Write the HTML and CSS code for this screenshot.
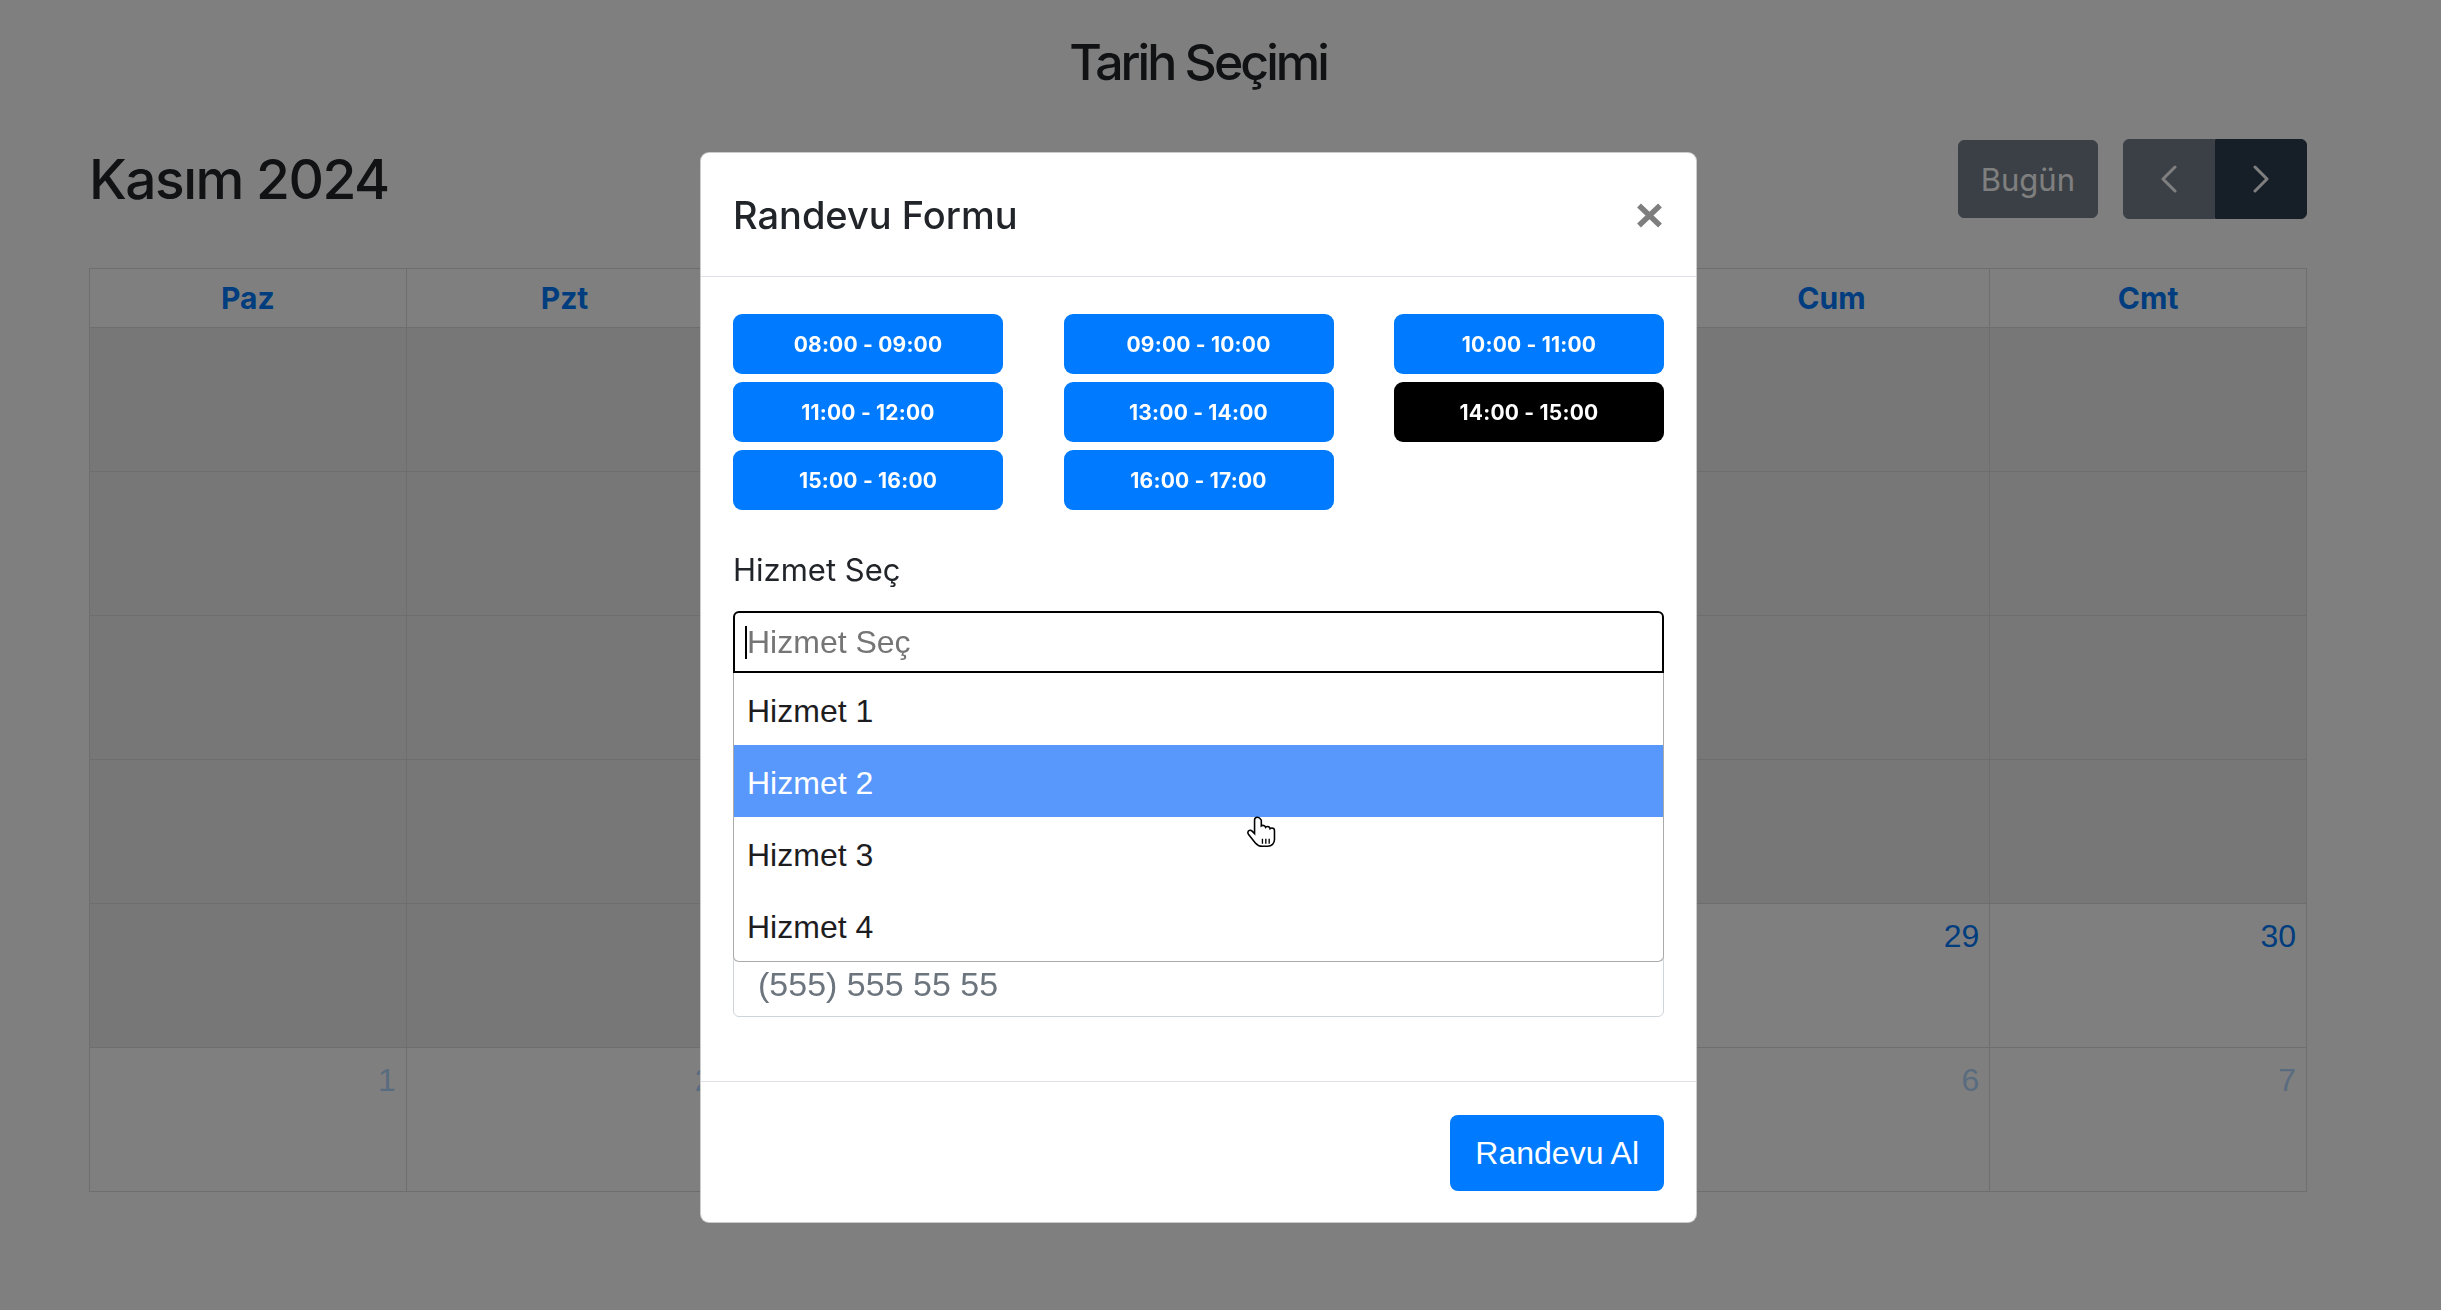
FILE: index.html
```html
<!DOCTYPE html>
<html lang="tr">
<head>
  <meta charset="UTF-8" />
  <meta name="viewport" content="width=device-width, initial-scale=1.0" />
  <title>Tarih Seçimi</title>
  <link rel="stylesheet" href="styles.css">
</head>
<body>
  <div class="page">
    <h2 class="page-title">Tarih Seçimi</h2>

    <div class="toolbar">
      <h1 class="cal-title">Kasım 2024</h1>
      <div class="toolbar-actions">
        <button class="fc-btn today-btn" disabled>Bugün</button>
        <div class="nav-group">
          <button class="fc-btn" disabled aria-label="Önceki">
            <svg width="16" height="28" viewBox="0 0 16 28"><polyline points="14,2 2,14 14,26" fill="none" stroke="#fff" stroke-width="3" stroke-linecap="round" stroke-linejoin="round"/></svg>
          </button>
          <button class="fc-btn" aria-label="Sonraki">
            <svg width="16" height="28" viewBox="0 0 16 28"><polyline points="2,2 14,14 2,26" fill="none" stroke="#fff" stroke-width="3" stroke-linecap="round" stroke-linejoin="round"/></svg>
          </button>
        </div>
      </div>
    </div>

    <div class="month-grid">
      <div class="dow">Paz</div>
      <div class="dow">Pzt</div>
      <div class="dow">Sal</div>
      <div class="dow">Çar</div>
      <div class="dow">Per</div>
      <div class="dow">Cum</div>
      <div class="dow">Cmt</div>

      <div class="day past"></div><div class="day past"></div><div class="day past"></div><div class="day past"></div><div class="day past"></div><div class="day past"></div><div class="day past"></div>
      <div class="day past"></div><div class="day past"></div><div class="day past"></div><div class="day past"></div><div class="day past"></div><div class="day past"></div><div class="day past"></div>
      <div class="day past"></div><div class="day past"></div><div class="day past"></div><div class="day past"></div><div class="day past"></div><div class="day past"></div><div class="day past"></div>
      <div class="day past"></div><div class="day past"></div><div class="day past"></div><div class="day past"></div><div class="day past"></div><div class="day past"></div><div class="day past"></div>
      <div class="day past"></div><div class="day past"></div><div class="day past"></div><div class="day past"></div><div class="day past"></div>
      <div class="day"><span class="num">29</span></div>
      <div class="day"><span class="num">30</span></div>

      <div class="day other"><span class="num">1</span></div>
      <div class="day other"><span class="num">2</span></div>
      <div class="day other"><span class="num">3</span></div>
      <div class="day other"><span class="num">4</span></div>
      <div class="day other"><span class="num">5</span></div>
      <div class="day other"><span class="num">6</span></div>
      <div class="day other"><span class="num">7</span></div>
    </div>
  </div>

  <div class="backdrop"></div>

  <div class="modal">
    <div class="modal-dialog">
      <div class="modal-content">
        <div class="modal-header">
          <h5 class="modal-title">Randevu Formu</h5>
          <button class="close" aria-label="Kapat">
            <svg width="27" height="25" viewBox="0 0 27 25"><path d="M3 2.5 L24 22.5 M24 2.5 L3 22.5" stroke="#000" stroke-width="5.5"/></svg>
          </button>
        </div>

        <div class="modal-body">
          <div class="slots">
            <button class="slot">08:00 - 09:00</button>
            <button class="slot">09:00 - 10:00</button>
            <button class="slot">10:00 - 11:00</button>
            <button class="slot">11:00 - 12:00</button>
            <button class="slot">13:00 - 14:00</button>
            <button class="slot active">14:00 - 15:00</button>
            <button class="slot">15:00 - 16:00</button>
            <button class="slot">16:00 - 17:00</button>
          </div>

          <label class="field-label">Hizmet Seç</label>
          <div class="combo">
            <div class="combo-search"><span class="caret"></span><span>Hizmet Seç</span></div>
            <ul class="combo-list">
              <li>Hizmet 1</li>
              <li class="highlighted">Hizmet 2</li>
              <li>Hizmet 3</li>
              <li>Hizmet 4</li>
            </ul>
          </div>

          <div class="phone-group">
            <input type="text" class="form-control" placeholder="(555) 555 55 55" />
          </div>
        </div>

        <div class="modal-footer">
          <button class="btn-submit">Randevu Al</button>
        </div>
      </div>
    </div>
  </div>

  <svg class="pointer" width="36" height="36" viewBox="0 0 32 32">
    <path d="M11 2c-1.5 0-2.5 1-2.5 2.5v12l-2.2-2.2c-1-1-2.8-1-3.5.2-.6 1-.3 2 .4 2.8l6 7.5c1.5 1.8 3 3 6 3h5c3.5 0 6-2.5 6-6v-8c0-1.3-1-2.3-2.3-2.3-.7 0-1.2.3-1.6.7-.2-1.2-1.1-2-2.3-2-.7 0-1.3.3-1.7.8-.3-1.1-1.2-1.8-2.3-1.8-.6 0-1.1.2-1.5.5V4.5C13.5 3 12.5 2 11 2z" fill="#fff" stroke="#000" stroke-width="1.4"/>
    <path d="M15.5 21v4.5M18.5 21v4.5M21.5 21v4.5" stroke="#000" stroke-width="1.2"/>
  </svg>
</body>
</html>
```

FILE: styles.css
```css
* {
  box-sizing: border-box;
}

body {
  margin: 0;
  background: #fff;
  color: #212529;
  font-family: Inter, "Noto Sans", sans-serif;
}

button {
  font-family: inherit;
  cursor: pointer;
}

.page {
  width: 2218px;
  margin-left: 89px;
}

.page-title {
  margin: 0;
  padding-top: 32px;
  font-size: 50px;
  line-height: 60px;
  font-weight: 500;
  letter-spacing: -3px;
  text-align: center;
}

/* calendar toolbar */
.toolbar {
  display: flex;
  justify-content: space-between;
  align-items: center;
  height: 80px;
  margin-top: 47px;
}

.cal-title {
  margin: 0;
  font-size: 55px;
  line-height: 66px;
  font-weight: 500;
  letter-spacing: -1.5px;
}

.toolbar-actions {
  display: flex;
  align-items: center;
  gap: 25px;
}

.fc-btn {
  background: #2c3e50;
  border: 1px solid #2c3e50;
  color: #fff;
  border-radius: 6px;
}

.fc-btn:disabled {
  opacity: 0.65;
}

.today-btn {
  height: 78px;
  padding: 0 22px;
  font-size: 31px;
}

.nav-group {
  display: flex;
}

.nav-group .fc-btn {
  width: 92px;
  height: 80px;
  padding: 0;
  display: flex;
  align-items: center;
  justify-content: center;
}

.nav-group .fc-btn:first-child {
  border-radius: 6px 0 0 6px;
}

.nav-group .fc-btn:last-child {
  border-radius: 0 6px 6px 0;
}

/* month grid */
.month-grid {
  display: grid;
  grid-template-columns: repeat(7, 1fr);
  grid-template-rows: 59px repeat(6, 144px);
  margin-top: 49px;
  border-top: 1px solid #ddd;
  border-left: 1px solid #ddd;
}

.dow,
.day {
  border-right: 1px solid #ddd;
  border-bottom: 1px solid #ddd;
}

.dow {
  display: flex;
  align-items: center;
  justify-content: center;
  font-size: 30px;
  font-weight: 700;
  color: #007bff;
}

.day {
  text-align: right;
  padding: 14px 10px 0 0;
}

.day.past {
  background: #eee;
}

.num {
  font-family: "Liberation Sans", Arial, sans-serif;
  font-size: 32px;
  color: #007bff;
}

.day.other .num {
  opacity: 0.3;
}

/* modal */
.backdrop {
  position: fixed;
  inset: 0;
  background: rgba(0, 0, 0, 0.5);
}

.modal {
  position: fixed;
  inset: 0;
  padding-right: 44px;
}

.modal-dialog {
  width: 997px;
  margin: 152px auto 0;
}

.modal-content {
  background: #fff;
  border: 1px solid rgba(0, 0, 0, 0.2);
  border-radius: 9px;
}

.modal-header {
  display: flex;
  justify-content: space-between;
  align-items: center;
  padding: 32px 33px 31px 32px;
  border-bottom: 1px solid #dee2e6;
}

.modal-title {
  margin: 0;
  font-size: 38px;
  line-height: 60px;
  font-weight: 500;
}

.close {
  background: none;
  border: 0;
  padding: 0;
  opacity: 0.5;
  display: flex;
}

.modal-body {
  padding: 37px 32px 64px;
}

.slots {
  display: grid;
  grid-template-columns: repeat(3, 270px);
  justify-content: space-between;
  row-gap: 8px;
}

.slot {
  height: 60px;
  border: 0;
  border-radius: 9px;
  background: #007bff;
  color: #fff;
  font-size: 21px;
  font-weight: 700;
  letter-spacing: 0.2px;
}

.slot.active {
  background: #000;
}

.field-label {
  display: block;
  margin: 37px 0 18px;
  font-size: 31px;
  line-height: 46px;
}

.combo {
  position: relative;
}

.combo-search {
  display: flex;
  align-items: center;
  height: 62px;
  padding-left: 10px;
  border: 2px solid #000;
  border-radius: 6px 6px 0 0;
  font-family: "Liberation Sans", Arial, sans-serif;
  font-size: 32px;
  color: #757575;
}

.caret {
  width: 2px;
  height: 33px;
  background: #000;
}

.combo-list {
  position: absolute;
  top: 100%;
  left: 0;
  right: 0;
  z-index: 2;
  margin: 0;
  padding: 0;
  list-style: none;
  background: #fff;
  border: 1px solid #aaa;
  border-top: 0;
  border-radius: 0 0 6px 6px;
}

.combo-list li {
  display: flex;
  align-items: center;
  height: 72px;
  padding: 4px 0 0 13px;
  font-family: "Liberation Sans", Arial, sans-serif;
  font-size: 32px;
  color: #1d1d1f;
}

.combo-list li.highlighted {
  background: #5897fb;
  color: #fff;
}

.phone-group {
  margin-top: 278px;
}

.form-control {
  display: block;
  width: 100%;
  height: 66px;
  padding: 0 24px;
  border: 1px solid #ced4da;
  border-radius: 6px;
  font-family: "Liberation Sans", Arial, sans-serif;
  font-size: 34px;
  color: #495057;
}

.form-control::placeholder {
  color: #6c757d;
}

.modal-footer {
  display: flex;
  justify-content: flex-end;
  padding: 33px 32px 31px;
  border-top: 1px solid #dee2e6;
}

.btn-submit {
  height: 76px;
  padding: 0 25px;
  border: 0;
  border-radius: 8px;
  background: #007bff;
  color: #fff;
  font-family: "Liberation Sans", Arial, sans-serif;
  font-size: 32px;
}

.pointer {
  position: fixed;
  left: 1245px;
  top: 815px;
  z-index: 5;
}
```
